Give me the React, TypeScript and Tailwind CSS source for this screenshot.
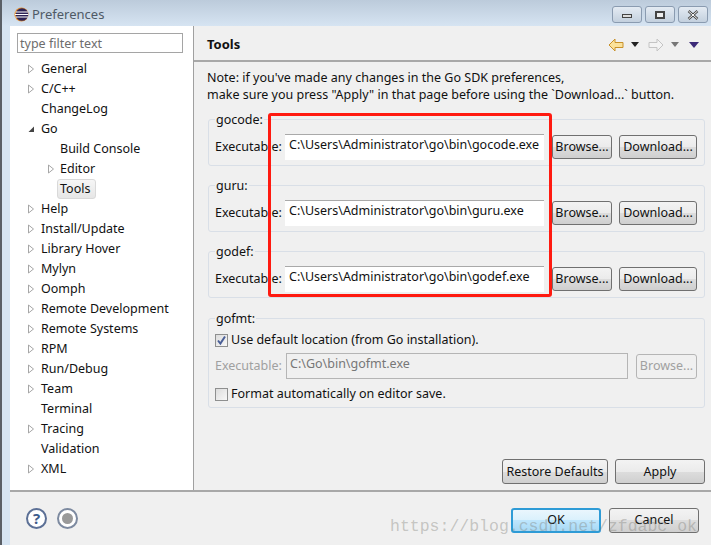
const font = { fontFamily: '"Noto Sans", sans-serif' }

const treeItems = [
  { label: 'General', indent: 0, arrow: 'closed' },
  { label: 'C/C++', indent: 0, arrow: 'closed' },
  { label: 'ChangeLog', indent: 0 },
  { label: 'Go', indent: 0, arrow: 'open' },
  { label: 'Build Console', indent: 1 },
  { label: 'Editor', indent: 1, arrow: 'closed' },
  { label: 'Tools', indent: 1, selected: true },
  { label: 'Help', indent: 0, arrow: 'closed' },
  { label: 'Install/Update', indent: 0, arrow: 'closed' },
  { label: 'Library Hover', indent: 0, arrow: 'closed' },
  { label: 'Mylyn', indent: 0, arrow: 'closed' },
  { label: 'Oomph', indent: 0, arrow: 'closed' },
  { label: 'Remote Development', indent: 0, arrow: 'closed' },
  { label: 'Remote Systems', indent: 0, arrow: 'closed' },
  { label: 'RPM', indent: 0, arrow: 'closed' },
  { label: 'Run/Debug', indent: 0, arrow: 'closed' },
  { label: 'Team', indent: 0, arrow: 'closed' },
  { label: 'Terminal', indent: 0 },
  { label: 'Tracing', indent: 0, arrow: 'closed' },
  { label: 'Validation', indent: 0 },
  { label: 'XML', indent: 0, arrow: 'closed' },
]

const tools = [
  { name: 'gocode:', path: 'C:\\Users\\Administrator\\go\\bin\\gocode.exe' },
  { name: 'guru:', path: 'C:\\Users\\Administrator\\go\\bin\\guru.exe' },
  { name: 'godef:', path: 'C:\\Users\\Administrator\\go\\bin\\godef.exe' },
]

function TreeArrow({ open }: { open?: boolean }) {
  if (open) {
    return (
      <svg width="8" height="8" viewBox="0 0 8 8">
        <path d="M7 1.5V7H1.5z" fill="#444" />
      </svg>
    )
  }
  return (
    <svg width="8" height="10" viewBox="0 0 8 10">
      <path d="M1.5 1v8L6.5 5z" fill="#fff" stroke="#a6a6a6" />
    </svg>
  )
}

function Btn({ label, className, disabled }: { label: string; className: string; disabled?: boolean }) {
  return (
    <button
      className={`shrink-0 flex items-center justify-center rounded-[3px] border text-[12.5px] ${
        disabled
          ? 'border-[#b5b5b5] bg-[#f0f0f0] text-[#a0a0a0]'
          : 'border-[#707070] bg-[linear-gradient(#f3f3f3_0%,#ebebeb_50%,#dddddd_50%,#cfcfcf_100%)] text-[#111]'
      } ${className}`}
    >
      {label}
    </button>
  )
}

function Check({ checked }: { checked?: boolean }) {
  return (
    <span className="w-[13px] h-[13px] shrink-0 border border-[#8e8f8f] bg-[linear-gradient(135deg,#dcdcdc,#f8f8f8)] flex items-center justify-center">
      {checked && (
        <svg width="11" height="11" viewBox="0 0 11 11">
          <path d="M2 5.5l2.4 3L9 1.5" fill="none" stroke="#4a5f97" strokeWidth="2" />
        </svg>
      )}
    </span>
  )
}

function ToolGroup({ name, path }: { name: string; path: string }) {
  return (
    <fieldset className="ml-[14px] mr-[6px] mb-[11px] border border-[#d9dfe7] rounded-[3px] pl-[6px] pr-[7px] pt-[6px] pb-[5px]">
      <legend className="px-[1px] h-[17px] leading-[17px] text-[12.5px] text-[#111]">{name}</legend>
      <div className="flex items-center h-[26px]">
        <span className="w-[70px] shrink-0 text-[12.5px] text-[#111]">Executable:</span>
        <div className="w-[259px] h-[26px] shrink-0 bg-white border-t border-[#a9a9a9] pl-[4px] leading-[20px] text-[12.5px] text-[#111]">
          {path}
        </div>
        <Btn label="Browse..." className="ml-[8px] w-[60px] h-[24px]" />
        <Btn label="Download..." className="ml-[7px] w-[78px] h-[24px]" />
      </div>
    </fieldset>
  )
}

export default function App() {
  return (
    <div className="relative w-[711px] h-[545px] overflow-hidden flex flex-col bg-[#d6e4f2]" style={font}>
      {/* title bar */}
      <div className="h-[26px] shrink-0 flex items-center pt-[3px] border-l-2 border-[#5a5f66] bg-[linear-gradient(#bccbdb,#d6e4f2)]">
        <svg className="ml-[12px]" width="15" height="15" viewBox="0 0 15 15">
          <circle cx="7.5" cy="7.5" r="7" fill="#e08a2c" />
          <circle cx="8" cy="7.5" r="6.3" fill="#2c2255" />
          <path d="M1.5 5h12.5M1 7.5h13.5M1.5 10h12.5" stroke="#fff" strokeWidth="1.2" />
        </svg>
        <span className="ml-[3px] text-[13px] text-[#4f5a66]">Preferences</span>
        <div className="ml-auto mr-[3px] flex gap-[3px]">
          <div className="w-[30px] h-[17px] rounded-[3px] border border-[#8a9bb0] bg-[linear-gradient(#e4ebf3,#c3d0de)] flex items-center justify-center">
            <span className="mt-[3px] w-[10px] h-[4px] border border-[#444] bg-[#ddd]" />
          </div>
          <div className="w-[30px] h-[17px] rounded-[3px] border border-[#8a9bb0] bg-[linear-gradient(#e4ebf3,#c3d0de)] flex items-center justify-center">
            <span className="w-[10px] h-[8px] border-2 border-[#444] bg-[#eee]" />
          </div>
          <div className="w-[30px] h-[17px] rounded-[3px] border border-[#8a9bb0] bg-[linear-gradient(#e4ebf3,#c3d0de)] flex items-center justify-center">
            <svg width="12" height="10" viewBox="0 0 12 10">
              <path d="M1.5 1l9 8M10.5 1l-9 8" stroke="#444" strokeWidth="2.4" />
              <path d="M1.5 1l9 8M10.5 1l-9 8" stroke="#fff" strokeWidth="1" />
            </svg>
          </div>
        </div>
      </div>

      <div className="flex-1 flex flex-col pl-[8px] border-l-2 border-[#5a5f66]">
        <div className="h-[464px] shrink-0 flex">
          {/* tree */}
          <div className="w-[184px] shrink-0 bg-white border-r border-[#a0a0a0] pl-[7px]">
            <div className="mt-[7px] w-[166px] h-[20px] border border-[#a5a5a5] pl-[2px] leading-[20px] text-[12.5px] text-[#6d6d6d]">
              type filter text
            </div>
            <div className="mt-[6px]">
              {treeItems.map((item) => (
                <div key={item.label} className="h-[20px] flex items-center text-[12.5px] text-[#111]">
                  <span className={`w-[10px] flex justify-center ${item.indent ? 'ml-[29px]' : 'ml-[9px]'}`}>
                    {item.arrow && <TreeArrow open={item.arrow === 'open'} />}
                  </span>
                  {item.selected ? (
                    <span className="ml-[1px] w-[39px] h-[20px] leading-[18px] pl-[2px] rounded-[3px] border border-[#d9d9d9] bg-[linear-gradient(#f6f6f6,#e6e6e6)]">
                      {item.label}
                    </span>
                  ) : (
                    <span className={item.indent ? 'ml-[4px]' : 'ml-[5px]'}>{item.label}</span>
                  )}
                </div>
              ))}
            </div>
          </div>

          {/* right panel */}
          <div className="flex-1 flex flex-col bg-[#f0f0f0]">
            <div className="h-[36px] shrink-0 flex items-center pt-[3px] border-b-2 border-[#a8a8a8] pl-[13px]">
              <span className="text-[13px] font-bold text-[#111]">Tools</span>
              <div className="ml-auto mr-[12px] flex items-center">
                <svg width="16" height="14" viewBox="0 0 16 14">
                  <path d="M7 1L1 7l6 6V9.5h8v-5H7z" fill="#fbe29b" stroke="#c8912a" />
                </svg>
                <svg className="ml-[7px]" width="8" height="5" viewBox="0 0 8 5">
                  <path d="M0 0h8L4 5z" fill="#222" />
                </svg>
                <svg className="ml-[9px]" width="16" height="14" viewBox="0 0 16 14">
                  <path d="M9 1l6 6-6 6V9.5H1v-5h8z" fill="#f3f3f3" stroke="#c4c4c4" />
                </svg>
                <svg className="ml-[7px]" width="8" height="5" viewBox="0 0 8 5">
                  <path d="M0 0h8L4 5z" fill="#777" />
                </svg>
                <svg className="ml-[10px]" width="10" height="6" viewBox="0 0 10 6">
                  <path d="M0 0h10L5 6z" fill="#3c2a78" />
                </svg>
              </div>
            </div>

            <p className="mt-[7px] ml-[13px] text-[12.5px] leading-[17px] text-[#111]">
              Note: if you've made any changes in the Go SDK preferences,
              <br />
              make sure you press "Apply" in that page before using the `Download...` button.
            </p>

            <div className="mt-[8px]">
              {tools.map((t) => (
                <ToolGroup key={t.name} name={t.name} path={t.path} />
              ))}
              <fieldset className="mt-[12px] ml-[14px] mr-[6px] border border-[#d9dfe7] rounded-[3px] pl-[6px] pr-[7px] pb-[4px]">
                <legend className="px-[1px] h-[17px] leading-[17px] text-[12.5px] text-[#111]">gofmt:</legend>
                <div className="flex items-center h-[17px] mt-[5px] gap-[3px] text-[12.5px] text-[#111]">
                  <Check checked />
                  Use default location (from Go installation).
                </div>
                <div className="flex items-center h-[26px] mt-[4px]">
                  <span className="w-[71px] shrink-0 text-[12.5px] text-[#a0a0a0]">Executable:</span>
                  <div className="w-[342px] h-[26px] shrink-0 bg-[#f0f0f0] border border-[#b5b5b5] pl-[3px] leading-[20px] text-[12.5px] text-[#777]">
                    {'C:\\Go\\bin\\gofmt.exe'}
                  </div>
                  <Btn label="Browse..." disabled className="ml-[8px] w-[61px] h-[25px]" />
                </div>
                <div className="flex items-center h-[17px] mt-[7px] gap-[3px] text-[12.5px] text-[#111]">
                  <Check />
                  Format automatically on editor save.
                </div>
              </fieldset>
            </div>

            <div className="mt-auto mb-[6px] mr-[6px] flex justify-end gap-[7px]">
              <Btn label="Restore Defaults" className="w-[106px] h-[25px] pt-[1px]" />
              <Btn label="Apply" className="w-[90px] h-[25px] pt-[1px]" />
            </div>
          </div>
        </div>

        {/* footer */}
        <div className="flex-1 flex items-center bg-[#f0f0f0] border-t-2 border-[#a8a8a8]">
          <span className="ml-[16px] w-[21px] h-[21px] rounded-full border-2 border-[#5c7096] bg-white flex items-center justify-center text-[15px] font-bold leading-none text-[#3f5b8c]">
            ?
          </span>
          <span className="ml-[10px] w-[21px] h-[21px] rounded-full border-2 border-[#7d8aa0] bg-white flex items-center justify-center">
            <span className="w-[11px] h-[11px] rounded-full bg-[#9a9a9a]" />
          </span>
          <div className="ml-auto mr-[12px] mt-[4px] flex gap-[8px]">
            <button className="w-[90px] h-[25px] rounded-[3px] border-2 border-[#2e9bd6] bg-[linear-gradient(#eaf6fd_0%,#d9f0fc_50%,#bee6fd_50%,#a7d9f5_100%)] text-[12.5px] text-[#111]">
              OK
            </button>
            <Btn label="Cancel" className="w-[90px] h-[25px]" />
          </div>
        </div>
      </div>

      {/* red annotation box */}
      <div className="absolute left-[268px] top-[113px] w-[284px] h-[184px] border-[3px] border-[#ff1a10] rounded-[3px]" />

      {/* watermark */}
      <span
        className="absolute left-[390px] top-[516px] text-[16.5px] leading-[22px] whitespace-nowrap text-[#80807a]/40"
        style={{ fontFamily: '"Liberation Mono", monospace' }}
      >
        https://blog.csdn.net/zfdabc_ok
      </span>
    </div>
  )
}
